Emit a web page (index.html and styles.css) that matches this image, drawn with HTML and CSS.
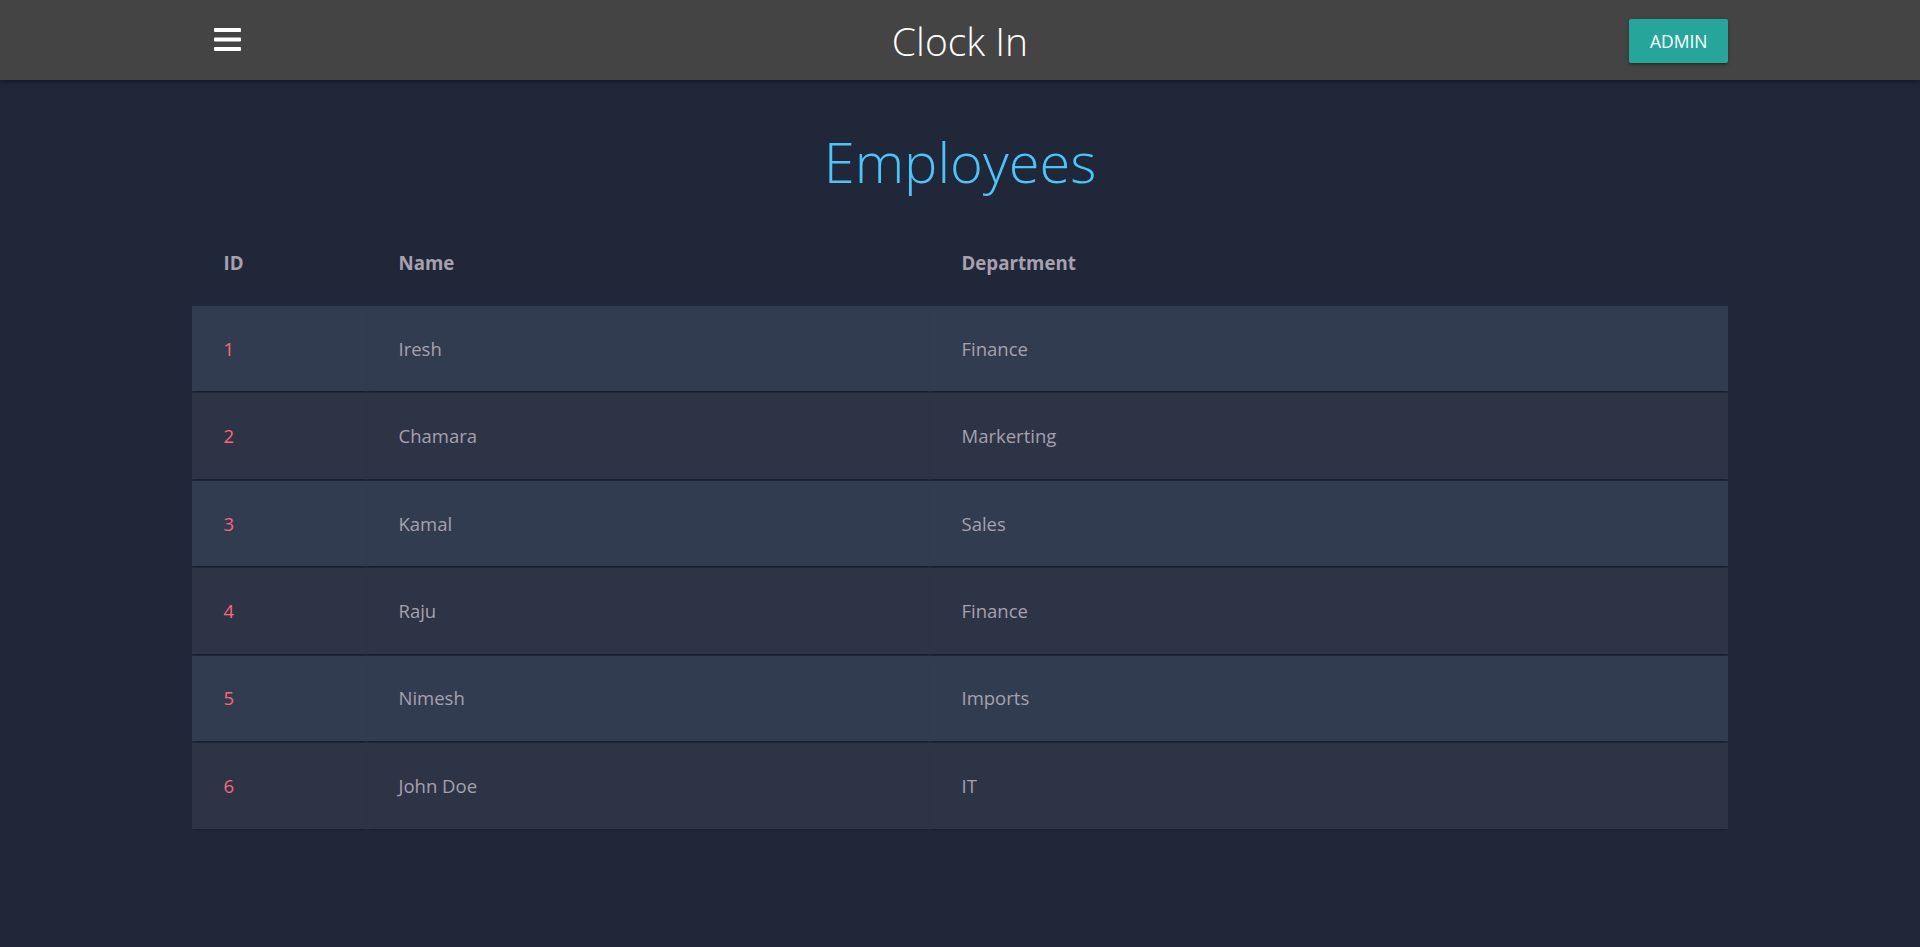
FILE: index.html
```html
<!DOCTYPE html>
<html lang="en">
<head>
<meta charset="utf-8">
<title>Clock In</title>
<link rel="stylesheet" href="styles.css">
</head>
<body>
<header class="topbar">
  <div class="topbar-inner">
    <div class="topbar-left">
      <button class="menu-btn" aria-label="Menu">
        <svg width="27" height="23" viewBox="0 0 27 23">
          <rect x="0" y="0" width="27" height="4" rx="1" fill="#fff"/>
          <rect x="0" y="9.5" width="27" height="4" rx="1" fill="#fff"/>
          <rect x="0" y="19" width="27" height="4" rx="1" fill="#fff"/>
        </svg>
      </button>
    </div>
    <div class="brand">Clock In</div>
    <div class="topbar-right">
      <a class="admin-btn" href="#">ADMIN</a>
    </div>
  </div>
</header>
<main>
  <h1 class="page-title">Employees</h1>
  <table class="emp-table">
    <colgroup>
      <col class="col-id">
      <col class="col-name">
      <col class="col-dept">
    </colgroup>
    <thead>
      <tr><th>ID</th><th>Name</th><th>Department</th></tr>
    </thead>
    <tbody>
      <tr><td>1</td><td>Iresh</td><td>Finance</td></tr>
      <tr><td>2</td><td>Chamara</td><td>Markerting</td></tr>
      <tr><td>3</td><td>Kamal</td><td>Sales</td></tr>
      <tr><td>4</td><td>Raju</td><td>Finance</td></tr>
      <tr><td>5</td><td>Nimesh</td><td>Imports</td></tr>
      <tr><td>6</td><td>John Doe</td><td>IT</td></tr>
    </tbody>
  </table>
</main>
</body>
</html>
```

FILE: styles.css
```css
html, body {
  margin: 0;
  padding: 0;
}
body {
  background: #1F2739;
  font-family: "Open Sans", "Noto Sans", sans-serif;
  min-height: 947px;
}
.topbar {
  height: 80px;
  background: #444444;
  box-shadow: 0 2px 4px rgba(0, 0, 0, 0.35);
  position: relative;
  z-index: 2;
}
.topbar-inner {
  width: 80%;
  margin: 0 auto;
  height: 80px;
  display: grid;
  grid-template-columns: 1fr auto 1fr;
  align-items: center;
}
.topbar-left {
  display: flex;
  align-items: center;
}
.menu-btn {
  background: none;
  border: 0;
  padding: 0;
  margin: 0 0 2px 22px;
  display: flex;
  cursor: pointer;
}
.brand {
  color: #ffffff;
  font-size: 39px;
  font-weight: 300;
  line-height: 50px;
  margin-top: 2px;
}
.topbar-right {
  display: flex;
  justify-content: flex-end;
}
.admin-btn {
  display: inline-block;
  background: #26a69a;
  color: #ffffff;
  text-decoration: none;
  font-size: 17.5px;
  line-height: 44px;
  height: 44px;
  padding: 0 20.5px;
  border-radius: 2px;
  margin-top: 2px;
  box-shadow: 0 2px 2px 0 rgba(0,0,0,0.14), 0 3px 1px -2px rgba(0,0,0,0.12), 0 1px 5px 0 rgba(0,0,0,0.2);
}
.page-title {
  margin: 43px 0 0;
  text-align: center;
  font-size: 56px;
  font-weight: 300;
  line-height: 76px;
  color: #4DC3FA;
}
.emp-table {
  width: 80%;
  margin: 21px auto 0;
  border-collapse: separate;
  border-spacing: 0 2px;
  table-layout: fixed;
  text-align: left;
}
.col-id { width: 175px; }
.col-name { width: 563px; }
.col-dept { width: 798px; }
.emp-table th {
  color: #A7A1AE;
  font-size: 18.7px;
  font-weight: 700;
  line-height: 24px;
  padding: 29px 0 29px 31.5px;
  background: #1F2739;
}
.emp-table td {
  color: #A7A1AE;
  font-size: 18.5px;
  font-weight: 400;
  line-height: 24px;
  padding: 30.72px 0 30.72px 31.5px;
  box-shadow: 0 2px 2px -2px #0E1119;
}
.emp-table td:first-child {
  color: #FB667A;
}
.emp-table tbody tr:nth-child(odd) {
  background: #323C50;
}
.emp-table tbody tr:nth-child(even) {
  background: #2C3446;
}
```
